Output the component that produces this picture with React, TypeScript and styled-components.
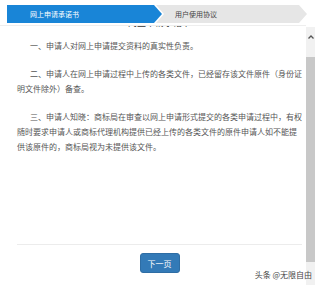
import React, { useLayoutEffect, useRef } from 'react';
import styled, { createGlobalStyle } from 'styled-components';

// == styles =======================================================================================
const GlobalStyle = createGlobalStyle`
  html, body {
    margin: 0;
    padding: 0;
    background: #ffffff;
    overflow: hidden;
  }

  body {
    font-family: "Noto Sans CJK SC", "Noto Sans", sans-serif;
  }
`;

const Root = styled.div`
  position: relative;
  display: flex;
  flex-direction: column;
  width: 321px;
  height: 285px;
  overflow: hidden;
`;

const Steps = styled.div`
  display: flex;
  height: 18px;
  padding: 5px 0 2px 7px;
`;

const Step = styled.div<{ $active?: boolean; $first?: boolean }>`
  display: flex;
  align-items: center;
  width: ${ ( p ) => ( p.$first ? 155 : 151 ) }px;
  margin-left: ${ ( p ) => ( p.$first ? 0 : -6 ) }px;
  padding-left: ${ ( p ) => ( p.$first ? 23 : 19 ) }px;
  box-sizing: border-box;
  font-size: 7px;
  color: ${ ( p ) => ( p.$active ? '#ffffff' : '#444444' ) };
  background: ${ ( p ) => ( p.$active ? '#1985d7' : '#e6e6e6' ) };
  clip-path: ${ ( p ) => ( p.$first
    ? 'polygon(0 0, calc(100% - 8px) 0, 100% 50%, calc(100% - 8px) 100%, 0 100%)'
    : 'polygon(0 0, calc(100% - 8px) 0, 100% 50%, calc(100% - 8px) 100%, 0 100%, 8px 50%)' ) };
`;

const Panel = styled.div`
  display: flex;
  flex: 1;
  min-height: 0;
`;

const Viewport = styled.div`
  flex: 1;
  overflow-y: scroll;
  scrollbar-width: none;
  border-top: 1px solid #eeeeee;

  &::-webkit-scrollbar {
    display: none;
  }
`;

const Document = styled.div`
  padding: 0 4px 15px 17px;
  color: #555555;
`;

const Article = styled.div`
  min-height: 228px;
`;

const Title = styled.div`
  font-size: 9px;
  line-height: 14px;
  text-align: center;
  color: #333333;
  margin-bottom: 8px;
`;

const Paragraph = styled.p`
  margin: 0 0 13px;
  font-size: 8px;
  line-height: 15px;
  text-indent: 13px;
`;

const Footer = styled.div`
  display: flex;
  justify-content: center;
  padding-top: 8px;
  border-top: 1px solid #ececec;
  padding-bottom: 20px;
`;

const NextButton = styled.button`
  width: 40px;
  height: 20px;
  padding: 0;
  border: 1px solid #2e6da4;
  border-radius: 3px;
  background: #337ab7;
  color: #ffffff;
  font-family: inherit;
  font-size: 8px;
  cursor: pointer;
`;

const ScrollTrack = styled.div`
  display: flex;
  flex-direction: column;
  align-items: center;
  width: 9px;
  margin: 2px 6px 0 0;
  background: #f1f1f1;
`;

const ArrowButton = styled.div`
  display: flex;
  align-items: center;
  justify-content: center;
  width: 100%;
  height: 20px;
`;

const Thumb = styled.div`
  width: 100%;
  height: 205px;
  margin-top: 10px;
  background: #c8c8c8;
`;

const Watermark = styled.div`
  position: absolute;
  right: 9px;
  bottom: 5px;
  font-size: 8px;
  line-height: 11px;
  color: #444444;
  text-shadow: 0 0 2px #ffffff, 0 0 2px #ffffff;
`;

// == element ======================================================================================
const paragraphs = [
  '一、申请人对网上申请提交资料的真实性负责。',
  '二、申请人在网上申请过程中上传的各类文件，已经留存该文件原件（身份证明文件除外）备查。',
  '三、申请人知晓：商标局在审查以网上申请形式提交的各类申请过程中，有权随时要求申请人或商标代理机构提供已经上传的各类文件的原件申请人如不能提供该原件的，商标局视为未提供该文件。',
];

const App = (): JSX.Element => {
  const refViewport = useRef<HTMLDivElement>( null );

  useLayoutEffect( () => {
    if ( refViewport.current ) { refViewport.current.scrollTop = 10; }
  }, [] );

  return (
    <Root>
      <GlobalStyle />
      <Steps>
        <Step $first $active>网上申请承诺书</Step>
        <Step>用户使用协议</Step>
      </Steps>
      <Panel>
        <Viewport ref={ refViewport }>
          <Document>
            <Article>
              <Title>网上申请承诺书</Title>
              { paragraphs.map( ( text ) => (
                <Paragraph key={ text }>{ text }</Paragraph>
              ) ) }
            </Article>
            <Footer>
              <NextButton type="button">下一页</NextButton>
            </Footer>
          </Document>
        </Viewport>
        <ScrollTrack>
          <ArrowButton>
            <svg width="6" height="4" viewBox="0 0 6 4">
              <path d="M0.5 3.5 L3 1 L5.5 3.5" fill="none" stroke="#555555" strokeWidth="1.3" />
            </svg>
          </ArrowButton>
          <Thumb />
        </ScrollTrack>
      </Panel>
      <Watermark>头条 @无限自由</Watermark>
    </Root>
  );
};

export default App;
